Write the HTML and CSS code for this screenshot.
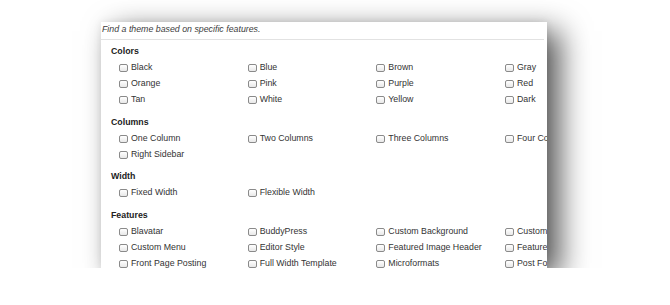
FILE: index.html
```html
<!DOCTYPE html>
<html>
<head>
  <title>Feature Filter</title>
  <link rel="stylesheet" href="styles.css">
</head>
<body>
  <div class="panel">
    <p class="intro">Find a theme based on specific features.</p>

    <div class="filters">
      <div class="group">
        <h4>Colors</h4>
        <div class="options">
          <label><input type="checkbox"> Black</label>
          <label><input type="checkbox"> Blue</label>
          <label><input type="checkbox"> Brown</label>
          <label><input type="checkbox"> Gray</label>
          <label><input type="checkbox"> Orange</label>
          <label><input type="checkbox"> Pink</label>
          <label><input type="checkbox"> Purple</label>
          <label><input type="checkbox"> Red</label>
          <label><input type="checkbox"> Tan</label>
          <label><input type="checkbox"> White</label>
          <label><input type="checkbox"> Yellow</label>
          <label><input type="checkbox"> Dark</label>
        </div>
      </div>

      <div class="group">
        <h4>Columns</h4>
        <div class="options">
          <label><input type="checkbox"> One Column</label>
          <label><input type="checkbox"> Two Columns</label>
          <label><input type="checkbox"> Three Columns</label>
          <label><input type="checkbox"> Four Columns</label>
          <label><input type="checkbox"> Right Sidebar</label>
        </div>
      </div>

      <div class="group">
        <h4>Width</h4>
        <div class="options">
          <label><input type="checkbox"> Fixed Width</label>
          <label><input type="checkbox"> Flexible Width</label>
        </div>
      </div>

      <div class="group">
        <h4>Features</h4>
        <div class="options">
          <label><input type="checkbox"> Blavatar</label>
          <label><input type="checkbox"> BuddyPress</label>
          <label><input type="checkbox"> Custom Background</label>
          <label><input type="checkbox"> Custom Colors</label>
          <label><input type="checkbox"> Custom Menu</label>
          <label><input type="checkbox"> Editor Style</label>
          <label><input type="checkbox"> Featured Image Header</label>
          <label><input type="checkbox"> Featured Images</label>
          <label><input type="checkbox"> Front Page Posting</label>
          <label><input type="checkbox"> Full Width Template</label>
          <label><input type="checkbox"> Microformats</label>
          <label><input type="checkbox"> Post Formats</label>
        </div>
      </div>
    </div>
  </div>
</body>
</html>
```

FILE: styles.css
```css
body {
  margin: 0;
  background-color: #fff;
  font-family: "Liberation Sans", Arial, sans-serif;
  font-size: 8.8px;
  color: #333;
}

.panel {
  margin: 22px 0 0 101px;
  width: 446px;
  height: 246px;
  overflow: hidden;
  background-color: #fff;
  box-shadow: 13px 9px 28px rgba(0, 0, 0, 0.66), 0 0 8px rgba(0, 0, 0, 0.08);
}

.intro {
  margin: 0 3px 0 0;
  padding: 1px 0 0 1px;
  height: 16px;
  line-height: 12px;
  font-style: italic;
  color: #3c3c3c;
  border-bottom: 1px solid #e2e2e2;
}

.filters {
  padding: 4px 0 0 10px;
}

.group {
  margin-bottom: 7.5px;
}

h4 {
  margin: 0;
  line-height: 15px;
  font-size: 8.8px;
  font-weight: bold;
  color: #222;
}

.options {
  display: grid;
  grid-template-columns: repeat(4, 128.67px);
  margin-left: 8px;
}

label {
  display: flex;
  align-items: center;
  height: 16px;
  white-space: nowrap;
}

input[type="checkbox"] {
  appearance: none;
  -webkit-appearance: none;
  width: 9px;
  height: 8px;
  margin: 2px 3px 0 0;
  border: 1px solid #8a8a8a;
  border-radius: 2px;
  background: linear-gradient(#fff, #e8e8e8);
  flex-shrink: 0;
}
```
